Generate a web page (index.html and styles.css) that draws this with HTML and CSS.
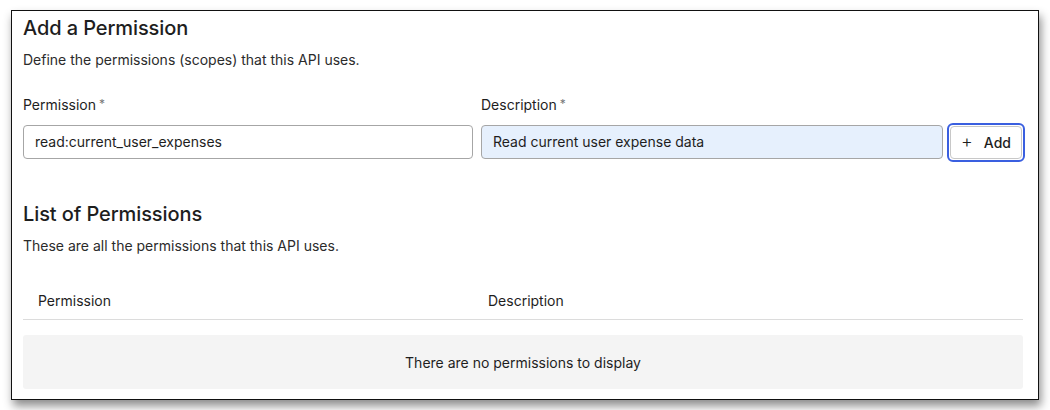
FILE: index.html
```html
<!DOCTYPE html>
<html>
<head>
<meta charset="utf-8">
<link rel="stylesheet" href="styles.css">
</head>
<body>
<div class="panel">
  <h2 class="title">Add a Permission</h2>
  <p class="sub">Define the permissions (scopes) that this API uses.</p>
  <div class="form">
    <div class="field perm">
      <label class="label">Permission<span class="req">*</span></label>
      <div class="input">read:current_user_expenses</div>
    </div>
    <div class="field desc">
      <label class="label">Description<span class="req">*</span></label>
      <div class="input filled">Read current user expense data</div>
    </div>
    <div class="btn-ring"><div class="btn"><span class="plus">+</span>Add</div></div>
  </div>
  <h2 class="title list-title">List of Permissions</h2>
  <p class="sub">These are all the permissions that this API uses.</p>
  <div class="thead">
    <div class="th th1">Permission</div>
    <div class="th th2">Description</div>
  </div>
  <div class="empty">There are no permissions to display</div>
</div>
</body>
</html>
```
FILE: styles.css
```css
* { box-sizing: border-box; }
html, body { margin: 0; padding: 0; background: #fff; }
body {
  font-family: Inter, "Noto Sans", sans-serif;
  color: #1e1e1e;
  width: 1050px;
  height: 410px;
  overflow: hidden;
}
.panel {
  margin: 10px 0 0 11px;
  width: 1028px;
  height: 390px;
  border: 1px solid #111;
  background: #fff;
  padding: 0 13px 0 11px;
  box-shadow: 2px 6px 9px rgba(0,0,0,0.45);
}
.title {
  margin: 0;
  font-size: 20px;
  font-weight: 500;
  line-height: 24px;
  padding-top: 5px;
  letter-spacing: -0.1px;
}
.sub {
  margin: 10px 0 0;
  font-size: 14px;
  line-height: 20px;
  color: #2b2b2b;
}
.form {
  display: flex;
  align-items: flex-end;
  margin-top: 25px;
}
.field { display: flex; flex-direction: column; flex-shrink: 0; }
.perm { width: 450px; margin-right: 8px; }
.desc { width: 462px; margin-right: 5px; }
.label {
  font-size: 14px;
  line-height: 18px;
  color: #1e1e1e;
  margin-bottom: 11px;
}
.req { color: #777; margin-left: 3px; font-size: 12px; vertical-align: 2px; }
.input {
  height: 34px;
  border: 1px solid #a6a6a6;
  border-radius: 4px;
  padding: 0 11px;
  font-size: 14px;
  line-height: 32px;
  color: #1e1e1e;
}
.input.filled { background: #e6f0fd; }
.btn-ring {
  flex-shrink: 0;
  width: 78px;
  height: 39px;
  border: 2px solid #3a5fe0;
  border-radius: 6px;
  padding: 1px;
  margin-bottom: -3px;
  margin-left: -1px;
}
.btn {
  width: 100%;
  height: 100%;
  border: 1px solid #c8c8c8;
  border-radius: 4px;
  display: flex;
  align-items: center;
  justify-content: center;
  font-size: 14px;
  font-weight: 500;
  color: #1e1e1e;
}
.plus { font-size: 18px; font-weight: 300; margin-right: 11px; margin-top: -2px; }
.list-title { margin-top: 43px; padding-top: 0; }
.thead {
  display: flex;
  margin-top: 36px;
  width: 1000px;
  border-bottom: 1px solid #dcdcdc;
  padding-bottom: 9px;
  font-size: 14px;
  line-height: 18px;
}
.th1 { width: 450px; padding-left: 15px; }
.th2 { padding-left: 15px; }
.empty {
  margin-top: 15px;
  width: 1000px;
  height: 54px;
  background: #f4f4f4;
  border-radius: 3px;
  display: flex;
  align-items: center;
  justify-content: center;
  font-size: 14px;
  color: #1e1e1e;
}
```
